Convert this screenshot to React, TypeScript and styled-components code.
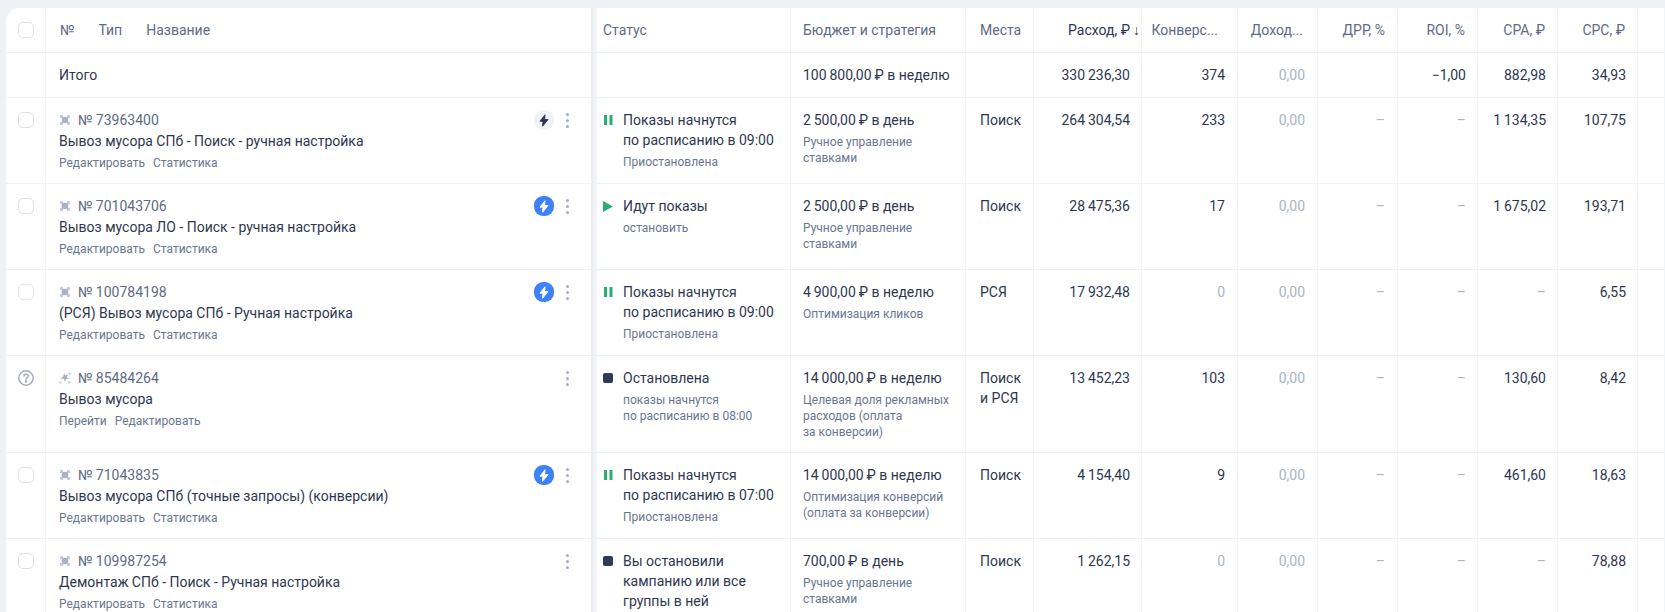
import { createGlobalStyle } from 'styled-components';
import styled from 'styled-components';

const GlobalStyle = createGlobalStyle`
  html, body {
    margin: 0;
    height: 100%;
    overflow: hidden;
    background: #eef2f7;
  }
  body {
    font-family: Roboto, 'Noto Sans', sans-serif;
    color: #2f3750;
  }
`;

const Page = styled.div`
  height: 612px;
  padding: 8px 0 0 6px;
  box-sizing: border-box;
  overflow: hidden;
`;

const Table = styled.div`
  background: #fff;
  border-top-left-radius: 14px;
  overflow: hidden;
  height: 604px;
`;

const Row = styled.div<{ $short?: boolean }>`
  display: grid;
  grid-template-columns: 40px 545px 200px 175px 68px 108px 96px 80px 80px 80px 80px 80px 27px;
  min-height: ${(p) => (p.$short ? '45px' : '86px')};
  box-sizing: border-box;
  border-bottom: 1px solid #eef1f6;
`;

const Cell = styled.div<{ $right?: boolean; $muted?: boolean }>`
  box-sizing: border-box;
  border-right: 1px solid #f1f3f8;
  padding: 12px 12px 12px;
  font-size: 14px;
  line-height: 20px;
  text-align: ${(p) => (p.$right ? 'right' : 'left')};
  color: ${(p) => (p.$muted ? '#a9b4c4' : '#2f3750')};
  white-space: nowrap;
  min-width: 0;
`;

const NumCell = styled(Cell)`
  padding-right: 11px;
  text-align: right;
`;

const PlaceCell = styled(Cell)`
  padding-left: 14px;
`;

const CheckCell = styled(Cell)`
  padding: 14px 0 0 12px;
`;

const Checkbox = styled.div`
  width: 16px;
  height: 16px;
  border: 1px solid #dde1ea;
  border-radius: 5px;
  box-sizing: border-box;
`;

const HeadCell = styled(Cell)<{ $inset?: number }>`
  padding-right: ${(p) => p.$inset ?? 12}px;
  color: #5f6b85;
  display: flex;
  align-items: flex-start;
  justify-content: ${(p) => (p.$right ? 'flex-end' : 'flex-start')};
`;

const SortedHead = styled(HeadCell)`
  color: #2f3750;
  padding-right: 1px;
  gap: 3px;
`;

const PlaceHead = styled(HeadCell)`
  padding-left: 14px;
`;

const HeadLabels = styled.div`
  display: flex;
  gap: 24px;
  padding-left: 1px;
  color: #5f6b85;
`;

const NameCell = styled(Cell)`
  position: relative;
  padding-left: 13px;
  border-right: none;
  display: flex;
  justify-content: space-between;
  &::after {
    content: '';
    position: absolute;
    top: 0;
    bottom: -1px;
    right: -6px;
    width: 6px;
    background: linear-gradient(to right, #e8ebf0, #f7f8fb);
  }
`;

const NameBody = styled.div`
  display: flex;
  flex-direction: column;
`;

const NumberLine = styled.div`
  display: flex;
  align-items: center;
  gap: 7px;
  color: #5f6b85;
`;

const CampaignName = styled.div`
  margin-top: 1px;
`;

const Links = styled.div`
  display: flex;
  gap: 8px;
  margin-top: 4px;
  font-size: 12px;
  line-height: 16px;
  color: #6b7690;
`;

const Actions = styled.div`
  display: flex;
  align-items: center;
  height: 20px;
  gap: 3px;
  margin-right: 2px;
`;

const Badge = styled.div<{ $active?: boolean }>`
  width: 20px;
  height: 20px;
  border-radius: 9px;
  display: flex;
  align-items: center;
  justify-content: center;
  background: ${(p) => (p.$active ? '#3d82f7' : '#f0f2f7')};
  color: ${(p) => (p.$active ? '#fff' : '#2f3750')};
`;

const Kebab = styled.div`
  width: 20px;
  height: 20px;
  display: flex;
  flex-direction: column;
  align-items: center;
  justify-content: center;
  gap: 3px;
  span {
    width: 3px;
    height: 3px;
    border-radius: 50%;
    background: #a4adc0;
  }
`;

const StatusCell = styled(Cell)`
  display: flex;
  padding-left: 12px;
  gap: 10px;
`;

const StatusIcon = styled.div`
  width: 10px;
  height: 20px;
  flex: none;
  display: flex;
  align-items: center;
  justify-content: flex-start;
`;

const Sub = styled.div<{ $gap?: boolean }>`
  font-size: 12px;
  line-height: 16px;
  color: #6b7690;
  margin-top: ${(p) => (p.$gap ? '4px' : '0')};
`;

const Muted = styled.span`
  color: #a9b4c4;
`;

function TypeIcon({ kind }: { kind?: string }) {
  if (kind === 'spark') {
    return (
      <svg width="12" height="12" viewBox="0 0 12 12" fill="#a9b2c4">
        <path d="M5 1.2 6.2 3.6l2.8-1.2-1.1 2.8 2.1 1.6-2.8.1-1.1 3-1.3-2.8-3.4-.6 2.7-1.7z" />
        <rect x="9.4" y="0.8" width="2" height="1.8" fill="#bcc3d1" />
        <rect x="9.4" y="9.4" width="2" height="2" fill="#bcc3d1" />
        <rect x="0.6" y="9.6" width="1.8" height="1.8" fill="#bcc3d1" />
      </svg>
    );
  }
  return (
    <svg width="12" height="12" viewBox="0 0 12 12" fill="#c3c9d6">
      <rect x="1" y="1" width="3.2" height="3.2" rx="1" />
      <rect x="7.8" y="1" width="3.2" height="3.2" rx="1" />
      <rect x="1" y="7.8" width="3.2" height="3.2" rx="1" />
      <rect x="7.8" y="7.8" width="3.2" height="3.2" rx="1" />
      <circle cx="6" cy="6" r="3.3" fill="#aab2c3" />
    </svg>
  );
}

function Bolt() {
  return (
    <svg width="10" height="13" viewBox="0 0 10 13" fill="currentColor" stroke="currentColor" strokeWidth="1" strokeLinejoin="round">
      <path d="M6 .8 1 7.2h3L3.6 12.2 9 5.6H5.6z" />
    </svg>
  );
}

function StatusGlyph({ kind }: { kind: string }) {
  if (kind === 'pause') {
    return (
      <svg width="9" height="10" viewBox="0 0 9 10" fill="#2aae74" style={{ marginLeft: 1 }}>
        <rect x="0" y="0" width="3" height="10" />
        <rect x="5.5" y="0" width="3" height="10" />
      </svg>
    );
  }
  if (kind === 'play') {
    return (
      <svg width="10" height="11" viewBox="0 0 10 11" fill="#2aae74">
        <path d="M0 0 10 5.5 0 11z" />
      </svg>
    );
  }
  return (
    <svg width="10" height="10" viewBox="0 0 10 10" fill="#2f3a55">
      <rect width="10" height="10" rx="2" />
    </svg>
  );
}

function HelpIcon() {
  return (
    <svg width="16" height="16" viewBox="0 0 16 16" fill="none" stroke="#a4adc0" strokeWidth="1.5" style={{ display: 'block' }}>
      <circle cx="8" cy="8" r="7.2" />
      <path d="M5.9 6.2c0-1.2 1-1.9 2.1-1.9s2.1.7 2.1 1.8c0 1.6-2.1 1.6-2.1 3.2" strokeLinecap="round" />
      <circle cx="8" cy="11.4" r="0.5" fill="#a4adc0" />
    </svg>
  );
}

interface Campaign {
  id: string;
  name: string;
  type?: string;
  bolt?: 'active' | 'idle';
  help?: boolean;
  links: string[];
  status: string;
  statusLines: string[];
  statusSub: string[];
  budget: string;
  strategy: string[];
  place: string[];
  spend: string;
  conv: string;
  convMuted?: boolean;
  cpa: string;
  cpaMuted?: boolean;
  cpc: string;
}

const editStats = ['Редактировать', 'Статистика'];

// thousands and the rouble sign sit on thin spaces
const campaigns: Campaign[] = [
  {
    id: '№ 73963400',
    name: 'Вывоз мусора СПб - Поиск - ручная настройка',
    bolt: 'idle',
    links: editStats,
    status: 'pause',
    statusLines: ['Показы начнутся', 'по расписанию в 09:00'],
    statusSub: ['Приостановлена'],
    budget: '2\u2009500,00\u2009₽ в день',
    strategy: ['Ручное управление', 'ставками'],
    place: ['Поиск'],
    spend: '264\u2009304,54',
    conv: '233',
    cpa: '1\u2009134,35',
    cpc: '107,75',
  },
  {
    id: '№ 701043706',
    name: 'Вывоз мусора ЛО - Поиск - ручная настройка',
    bolt: 'active',
    links: editStats,
    status: 'play',
    statusLines: ['Идут показы'],
    statusSub: ['остановить'],
    budget: '2\u2009500,00\u2009₽ в день',
    strategy: ['Ручное управление', 'ставками'],
    place: ['Поиск'],
    spend: '28\u2009475,36',
    conv: '17',
    cpa: '1\u2009675,02',
    cpc: '193,71',
  },
  {
    id: '№ 100784198',
    name: '(РСЯ) Вывоз мусора СПб - Ручная настройка',
    bolt: 'active',
    links: editStats,
    status: 'pause',
    statusLines: ['Показы начнутся', 'по расписанию в 09:00'],
    statusSub: ['Приостановлена'],
    budget: '4\u2009900,00\u2009₽ в неделю',
    strategy: ['Оптимизация кликов'],
    place: ['РСЯ'],
    spend: '17\u2009932,48',
    conv: '0',
    convMuted: true,
    cpa: '–',
    cpaMuted: true,
    cpc: '6,55',
  },
  {
    id: '№ 85484264',
    name: 'Вывоз мусора',
    type: 'spark',
    help: true,
    links: ['Перейти', 'Редактировать'],
    status: 'stop',
    statusLines: ['Остановлена'],
    statusSub: ['показы начнутся', 'по расписанию в 08:00'],
    budget: '14\u2009000,00\u2009₽ в неделю',
    strategy: ['Целевая доля рекламных', 'расходов (оплата', 'за конверсии)'],
    place: ['Поиск', 'и РСЯ'],
    spend: '13\u2009452,23',
    conv: '103',
    cpa: '130,60',
    cpc: '8,42',
  },
  {
    id: '№ 71043835',
    name: 'Вывоз мусора СПб (точные запросы) (конверсии)',
    bolt: 'active',
    links: editStats,
    status: 'pause',
    statusLines: ['Показы начнутся', 'по расписанию в 07:00'],
    statusSub: ['Приостановлена'],
    budget: '14\u2009000,00\u2009₽ в неделю',
    strategy: ['Оптимизация конверсий', '(оплата за конверсии)'],
    place: ['Поиск'],
    spend: '4\u2009154,40',
    conv: '9',
    cpa: '461,60',
    cpc: '18,63',
  },
  {
    id: '№ 109987254',
    name: 'Демонтаж СПб - Поиск - Ручная настройка',
    links: editStats,
    status: 'stop',
    statusLines: ['Вы остановили', 'кампанию или все', 'группы в ней'],
    statusSub: [],
    budget: '700,00\u2009₽ в день',
    strategy: ['Ручное управление', 'ставками'],
    place: ['Поиск'],
    spend: '1\u2009262,15',
    conv: '0',
    convMuted: true,
    cpa: '–',
    cpaMuted: true,
    cpc: '78,88',
  },
];

export default function App() {
  return (
    <>
      <GlobalStyle />
      <Page>
        <Table>
          <Row $short>
            <CheckCell>
              <Checkbox />
            </CheckCell>
            <NameCell>
              <HeadLabels>
                <span>№</span>
                <span>Тип</span>
                <span>Название</span>
              </HeadLabels>
            </NameCell>
            <HeadCell>Статус</HeadCell>
            <HeadCell>Бюджет и стратегия</HeadCell>
            <PlaceHead>Места</PlaceHead>
            <SortedHead $right>Расход, ₽ <span>↓</span></SortedHead>
            <HeadCell $right $inset={19}>Конверс...</HeadCell>
            <HeadCell $right $inset={14}>Доход...</HeadCell>
            <HeadCell $right>ДРР, %</HeadCell>
            <HeadCell $right>ROI, %</HeadCell>
            <HeadCell $right>CPA, ₽</HeadCell>
            <HeadCell $right>CPC, ₽</HeadCell>
            <HeadCell />
          </Row>
          <Row $short>
            <Cell />
            <NameCell>Итого</NameCell>
            <Cell />
            <Cell>100{'\u2009'}800,00{'\u2009'}₽ в неделю</Cell>
            <Cell />
            <NumCell>330{'\u2009'}236,30</NumCell>
            <Cell $right>374</Cell>
            <Cell $right $muted>0,00</Cell>
            <Cell $right />
            <NumCell>−1,00</NumCell>
            <NumCell>882,98</NumCell>
            <NumCell>34,93</NumCell>
            <Cell />
          </Row>
          {campaigns.map((c) => (
            <Row key={c.id}>
              <CheckCell>{c.help ? <HelpIcon /> : <Checkbox />}</CheckCell>
              <NameCell>
                <NameBody>
                  <NumberLine>
                    <TypeIcon kind={c.type} />
                    {c.id}
                  </NumberLine>
                  <CampaignName>{c.name}</CampaignName>
                  <Links>
                    {c.links.map((l) => (
                      <span key={l}>{l}</span>
                    ))}
                  </Links>
                </NameBody>
                <Actions>
                  {c.bolt && (
                    <Badge $active={c.bolt === 'active'}>
                      <Bolt />
                    </Badge>
                  )}
                  <Kebab>
                    <span />
                    <span />
                    <span />
                  </Kebab>
                </Actions>
              </NameCell>
              <StatusCell>
                <StatusIcon>
                  <StatusGlyph kind={c.status} />
                </StatusIcon>
                <div>
                  {c.statusLines.map((l) => (
                    <div key={l}>{l}</div>
                  ))}
                  {c.statusSub.map((l, i) => (
                    <Sub key={l} $gap={i === 0}>{l}</Sub>
                  ))}
                </div>
              </StatusCell>
              <Cell>
                <div>{c.budget}</div>
                {c.strategy.map((l, i) => (
                  <Sub key={l} $gap={i === 0}>{l}</Sub>
                ))}
              </Cell>
              <PlaceCell>
                {c.place.map((l) => (
                  <div key={l}>{l}</div>
                ))}
              </PlaceCell>
              <NumCell>{c.spend}</NumCell>
              <Cell $right $muted={c.convMuted}>{c.conv}</Cell>
              <Cell $right $muted>0,00</Cell>
              <Cell $right><Muted>–</Muted></Cell>
              <NumCell><Muted>–</Muted></NumCell>
              <NumCell $muted={c.cpaMuted}>{c.cpa}</NumCell>
              <NumCell>{c.cpc}</NumCell>
              <Cell />
            </Row>
          ))}
        </Table>
      </Page>
    </>
  );
}
